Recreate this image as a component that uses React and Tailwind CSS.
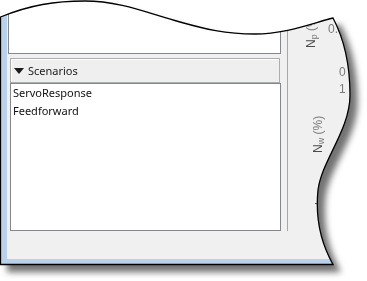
import React from 'react'

// torn-paper outline of the captured window
const TORN =
  'M0.5,17 C30,5 55,1 85,1 C120,1 150,14 180,22 C205,29 225,34 255,34 C285,34 310,24 333,18 C342,35 350,60 350,95 C350,130 322,160 318,190 C315,220 322,245 333,264.5 L0.5,264.5 Z'

const uiFont = { fontFamily: '"Noto Sans", "Open Sans", sans-serif' }

function ScenarioHeader() {
  return (
    <div className="ml-[3px] mt-[4px] w-[270px] h-[25px] border border-[#adadad] bg-[#efefef] shadow-[inset_1px_1px_0_#ffffff] flex items-center pl-[3px] pt-[1px]">
      <svg width="10" height="6" viewBox="0 0 10 6" className="shrink-0">
        <path d="M0 0 L10 0 L5 6 Z" fill="#1a1a1a" />
      </svg>
      <span className="ml-[4px] text-[11px] leading-[18px] text-[#1a1a1a]">Scenarios</span>
    </div>
  )
}

function ScenarioList({ items }) {
  return (
    <div className="ml-[3px] w-[271px] flex-1 border border-[#828790] bg-white pl-[2px]">
      {items.map(name => (
        <div key={name} className="text-[11px] leading-[18px] text-[#111]">{name}</div>
      ))}
    </div>
  )
}

function AxisStrip() {
  return (
    <div className="flex-1 pl-[6px] flex">
      <div className="relative flex-1 border-l border-[#a7a7a7] font-['Liberation_Sans',Arial,sans-serif]">
        <span className="absolute left-[40px] top-[23px] text-[12px] leading-none text-[#7a7a7a]">0.5</span>
        <span className="absolute left-[51px] top-[66px] text-[12px] leading-none text-[#7a7a7a]">0</span>
        <span className="absolute left-[51px] top-[83px] text-[12px] leading-none text-[#7a7a7a]">1</span>
        <span className="absolute left-[17px] top-[48px] origin-top-left -rotate-90 whitespace-nowrap text-[12px] leading-none text-[#4a4a4a]">
          N<sub className="text-[#777]">p</sub> <span className="text-[#777]">(%)</span>
        </span>
        <span className="absolute left-[24px] top-[153px] origin-top-left -rotate-90 whitespace-nowrap text-[12px] leading-none text-[#4a4a4a]">
          N<sub className="text-[#777]">w</sub> <span className="text-[#777]">(%)</span>
        </span>
        {/* axis tick poking out at the torn edge */}
        <span className="absolute left-[27px] top-[203px] w-[4px] h-px bg-[#555]" />
      </div>
    </div>
  )
}

export default function App() {
  return (
    <div className="w-[367px] h-[281px] bg-white overflow-hidden">
      <div className="relative w-[367px] h-[281px] [filter:drop-shadow(7px_7px_3px_rgba(0,0,0,0.55))]">
        <svg width="0" height="0" className="absolute">
          <defs>
            <clipPath id="torn" clipPathUnits="userSpaceOnUse">
              <path d={TORN} />
            </clipPath>
          </defs>
        </svg>
        <div className="w-[367px] h-[281px] [clip-path:url(#torn)]" style={uiFont}>
          <div className="w-[352px] h-[265px] bg-[#b9d1ea] pl-[7px] pb-[5px] border-b border-[#22c4e6] flex">
            <div className="flex-1 bg-[#f0f0f0] flex flex-col">
              <div className="h-[231px] flex">
                <div className="w-[274px] flex flex-col">
                  <div className="ml-[1px] w-[273px] h-[54px] bg-white border-l border-r border-b border-[#828790]" />
                  <ScenarioHeader />
                  <ScenarioList items={['ServoResponse', 'Feedforward']} />
                </div>
                <AxisStrip />
              </div>
              <div className="flex-1" />
            </div>
          </div>
        </div>
        <svg width="367" height="281" className="absolute left-0 top-0 pointer-events-none">
          <path d={TORN} fill="none" stroke="#000" strokeWidth="1.3" />
        </svg>
      </div>
    </div>
  )
}
